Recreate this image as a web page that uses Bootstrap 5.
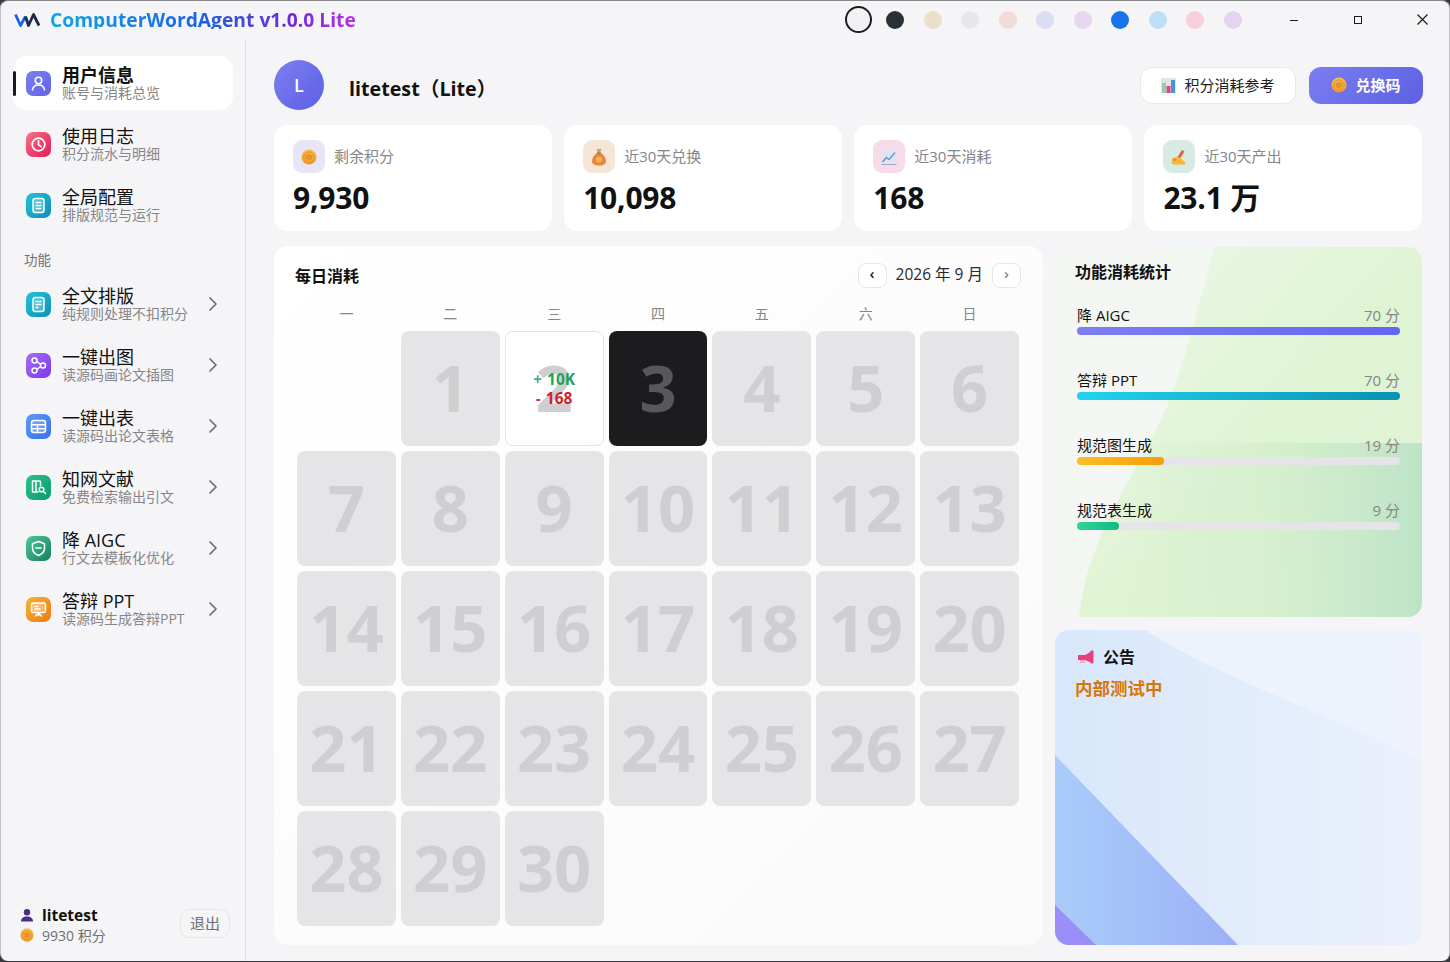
<!DOCTYPE html>
<html lang="zh-CN">
<head>
  <meta charset="UTF-8">
  <title>ComputerWordAgent</title>
  <link href="https://cdn.jsdelivr.net/npm/bootstrap@5.3.0/dist/css/bootstrap.min.css" rel="stylesheet">
  <style>
    html, body { height: 100%; }
    body { background: #3a3a3c; font-family: "Open Sans", "Noto Sans CJK SC", sans-serif; color: #111; overflow: hidden; }
    .app-window { width: 1450px; height: 961px; background: #f5f5f7; border-radius: 8px; border: 1px solid #c4c4c6; border-top-color: #8a8a8c; border-bottom: 0; overflow: hidden; }
    .title-bar { height: 39px; padding-left: 13px; padding-bottom: 2px; }
    .app-title { font-size: 19.25px; font-weight: 700; margin-left: 9px; line-height: 1; background: linear-gradient(90deg, #0ea5e9 0%, #1d62e0 50%, #6d28d9 78%, #b832e6 100%); -webkit-background-clip: text; background-clip: text; color: transparent; }
    .swatch { width: 18px; height: 18px; border-radius: 50%; margin-right: 19.5px; flex: none; }
    .swatch-on { width: 27px; height: 27px; background: #f2f2f4; border: 2px solid #1c1c1e; margin-left: -1px; margin-right: 14px; }
    .win-btns { width: 196px; padding-right: 20px; padding-left: 36px; margin-left: -8px; }
    .side-col { width: 245px; border-right: 1px solid #e2e2e5; flex: none; height: 922px; padding: 16px 12px 0 12px; }
    .side-item { height: 54px; margin-bottom: 7px; padding-left: 13px; border-radius: 14px; position: relative; }
    .side-item.is-on { background: #fff; }
    .side-item.is-on::before { content: ""; position: absolute; left: 0; top: 15px; width: 3px; height: 25px; background: #1c1c1e; border-radius: 2px; }
    .side-icon { width: 25px; height: 25px; border-radius: 7px; flex: none; margin-right: 11px; }
    .side-text { margin-bottom: 1px; }
    .is-on .side-text { margin-bottom: 0; }
    .side-name { font-size: 18px; line-height: 20px; color: #111; }
    .is-on .side-name { font-weight: 700; }
    .side-sub { font-size: 14px; line-height: 16px; color: #85858a; }
    .side-chev { margin-right: 15px; }
    .side-group { font-size: 13.5px; color: #6e6e73; padding-left: 11px; margin-top: 11px; margin-bottom: 7px; line-height: 20px; }
    .side-foot { height: 60px; padding-left: 7px; padding-right: 3px; margin-bottom: 7px; }
    .foot-name { font-size: 15.5px; font-weight: 700; line-height: 20px; }
    .foot-pts { font-size: 14px; color: #6e6e73; line-height: 21px; }
    .exit-btn { font-size: 15px; color: #6e6e73; background: #f5f5f7; border: 1px solid #e6e6e9; border-radius: 9px; width: 50px; height: 29px; padding: 0; margin-bottom: 4px; }
    .main-col { padding: 20px 27px 0 28px; width: 1204px; }
    .avatar-ball { width: 50px; height: 50px; border-radius: 50%; background: linear-gradient(135deg, #7c80f0, #5b5fe6); color: #fff; font-size: 18px; font-weight: 600; }
    .user-title { font-size: 19.7px; font-weight: 700; margin-left: 25px; line-height: 1; padding-top: 7px; }
    .ref-btn { width: 156px; height: 37px; background: #fff; border: 1px solid #e8e8ec; border-radius: 12px; font-size: 15px; color: #1c1c1e; margin-right: 13px; padding: 0; }
    .code-btn { width: 114px; height: 37px; background: linear-gradient(135deg, #7b7ff2, #5c60e2); border: 0; border-radius: 12px; font-size: 15px; font-weight: 700; color: #fff; padding: 0; margin-right: -1px; }
    .head-row { height: 50px; margin-bottom: 15px; }
    .stat-row { gap: 12.5px; margin-bottom: 15px; }
    .stat-box { flex: 1 1 0; height: 106px; background: #fff; border-radius: 14px; padding: 15px 19px 0; }
    .stat-ico { width: 32px; height: 33px; border-radius: 9px; margin-right: 9px; flex: none; }
    .stat-label { font-size: 15px; color: #85858a; line-height: 30px; margin-bottom: 2px; }
    .stat-num { font-size: 30px; font-weight: 700; line-height: 40px; margin-top: 5px; letter-spacing: -.2px; }
    .lower-row { gap: 12px; }
    .cal-panel { width: 769px; height: 699px; background: linear-gradient(135deg, #fff 0%, #fafafa 100%); border-radius: 14px; padding: 18px 22px 0 21px; }
    .panel-title { font-size: 16px; font-weight: 700; line-height: 24px; }
    .month-nav { margin-top: -2px; }
    .month-btn { width: 29px; height: 25px; background: #fff; border: 1px solid #e6e6e9; border-radius: 8px; font-size: 15px; font-weight: 600; line-height: 1; color: #1c1c1e; padding: 0 0 3px; }
    .month-btn.is-next { color: #85858a; }
    .month-txt { font-size: 15.5px; margin: 0 9px 0 9px; color: #2a2a2e; }
    .week-row, .cal-grid { grid-template-columns: repeat(7, 1fr); width: 722px; column-gap: 5px; margin-left: 2px; }
    .week-row { margin-top: 16px; font-size: 14px; color: #85858a; text-align: center; height: 27px; line-height: 20px; }
    .cal-grid { grid-auto-rows: 115px; row-gap: 5px; }
    .cal-day { background: #e5e5e7; border-radius: 8px; color: #cfcfd2; font-size: 65px; font-weight: 700; position: relative; line-height: 1; padding-bottom: 2px; }
    .cal-day.is-today { background: #1c1c1e; color: #58585b; }
    .cal-day.has-data { background: #fff; border: 1px solid #e4e4e6; }
    .cal-chip { position: absolute; inset: 0; font-size: 15.5px; font-weight: 700; line-height: 19px; padding-top: 1px; }
    .chip-up { color: #1fa35a; }
    .chip-down { color: #d11f2f; }
    .chip-sign { opacity: .85; margin-right: 5px; }
    .side-panels { width: 367px; gap: 13px; }
    .usage-panel { height: 370px; border-radius: 14px; position: relative; overflow: hidden; padding: 13px 22px 0 20px; background: linear-gradient(90deg, #f3f6f2, #f5f9f3); margin-top: 1px; }
    .notice-panel { height: 315px; border-radius: 14px; position: relative; overflow: hidden; padding: 15px 20px 0; background: #edf2fc; }
    .panel-bg { position: absolute; inset: 0; width: 100%; height: 100%; }
    .panel-body { position: relative; }
    .usage-title { font-size: 16px; font-weight: 700; line-height: 24px; margin-bottom: 21px; }
    .usage-item { padding-left: 2px; height: 65px; font-size: 15px; line-height: 20px; }
    .usage-val { color: #85858a; }
    .usage-track { height: 8px; background: #e5e5e7; border-radius: 4px; margin-top: 2px; }
    .usage-fill { height: 100%; border-radius: 4px; }
    .fill-a { background: linear-gradient(90deg, #7c80f0, #6366f1); }
    .fill-b { background: linear-gradient(90deg, #22d3ee, #0891b2); }
    .fill-c { background: linear-gradient(90deg, #fbbf24, #f59e0b); }
    .fill-d { background: linear-gradient(90deg, #34d399, #10b981); }
    .notice-title { font-size: 16px; font-weight: 700; line-height: 24px; padding-left: 2px; }
    .notice-text { font-size: 17.5px; font-weight: 700; color: #d97706; line-height: 24px; margin-top: 7px; }
  </style>
</head>
<body>
<svg width="0" height="0" class="position-absolute">
  <defs>
    <linearGradient id="coinFill" x1="0" y1="0" x2="0" y2="1"><stop offset="0" stop-color="#fbbf4d"/><stop offset="1" stop-color="#f0932b"/></linearGradient>
    <symbol id="ico-coin" viewBox="0 0 16 16"><circle cx="8" cy="8" r="7.6" fill="url(#coinFill)"/><circle cx="8" cy="8" r="5.2" fill="#f5a83a" stroke="#e08a1e" stroke-width=".6"/><path d="M5.8 6.6h4.4v3.4H5.8zM8 6.6v3.4" fill="none" stroke="#cf7d16" stroke-width=".8"/></symbol>
    <symbol id="ico-chev" viewBox="0 0 10 16"><path d="M2 2l6 6-6 6" fill="none" stroke="#6e6e73" stroke-width="1.7" stroke-linecap="round" stroke-linejoin="round"/></symbol>
  </defs>
</svg>
<div class="app-window">
  <div class="title-bar d-flex align-items-center">
    <svg width="27" height="16" viewBox="0 0 27 16"><path d="M1.500 2.500l5 11 5-9" fill="none" stroke="#1d62e0" stroke-width="2.800" stroke-linejoin="round"/><path d="M11.500 4.500l3 9 5-11 5.500 11" fill="none" stroke="#1e2a44" stroke-width="2.800" stroke-linejoin="round"/></svg>
    <div class="app-title">ComputerWordAgent v1.0.0 Lite</div>
    <div class="ms-auto d-flex align-items-center">
      <span class="swatch swatch-on"></span>
      <span class="swatch" style="background:#2b3038"></span>
      <span class="swatch" style="background:#ecdfca"></span>
      <span class="swatch" style="background:#e7e7ea"></span>
      <span class="swatch" style="background:#f2dcd6"></span>
      <span class="swatch" style="background:#d9def5"></span>
      <span class="swatch" style="background:#e6d6f0"></span>
      <span class="swatch" style="background:#1a73e8"></span>
      <span class="swatch" style="background:#bfdff8"></span>
      <span class="swatch" style="background:#f9cfdc"></span>
      <span class="swatch" style="background:#e6d3f0"></span>
      <div class="win-btns d-flex justify-content-between align-items-center">
        <svg width="10" height="10" viewBox="0 0 10 10"><path d="M1 5.500h8" stroke="#1c1c1e" stroke-width="1"/></svg>
        <svg width="10" height="10" viewBox="0 0 10 10"><rect x="1.500" y="1.500" width="7" height="7" fill="none" stroke="#1c1c1e" stroke-width="1"/></svg>
        <svg width="13" height="13" viewBox="0 0 13 13"><path d="M1.500 1.500l10 10M11.500 1.500l-10 10" stroke="#1c1c1e" stroke-width="1.200"/></svg>
      </div>
    </div>
  </div>

  <div class="d-flex">
    <div class="side-col d-flex flex-column">
      <div class="side-item is-on d-flex align-items-center">
        <div class="side-icon d-flex align-items-center justify-content-center" style="background:linear-gradient(135deg,#7c80f0,#5f63e6)"><svg width="17" height="17" viewBox="0 0 17 17" fill="none" stroke="#fff" stroke-width="1.600"><circle cx="8.500" cy="5.500" r="3.200"/><path d="M2.500 15c.4-3.400 2.800-5 6-5s5.600 1.600 6 5" stroke-linecap="round"/></svg></div>
        <div class="side-text"><div class="side-name">用户信息</div><div class="side-sub">账号与消耗总览</div></div>
      </div>
      <div class="side-item d-flex align-items-center">
        <div class="side-icon d-flex align-items-center justify-content-center" style="background:linear-gradient(135deg,#f87187,#e11d58)"><svg width="17" height="17" viewBox="0 0 17 17" fill="none" stroke="#fff" stroke-width="1.700"><circle cx="8.500" cy="8.500" r="6.300"/><path d="M8.500 4.800v4l2.600 1.800" stroke-linecap="round"/></svg></div>
        <div class="side-text"><div class="side-name">使用日志</div><div class="side-sub">积分流水与明细</div></div>
      </div>
      <div class="side-item d-flex align-items-center">
        <div class="side-icon d-flex align-items-center justify-content-center" style="background:linear-gradient(135deg,#22c3dc,#0e8fb5)"><svg width="17" height="17" viewBox="0 0 17 17" fill="none" stroke="#fff" stroke-width="1.500"><rect x="3" y="1.500" width="11" height="14" rx="2.200" fill="#ffffff40"/><path d="M5.500 5.500h6M5.500 8.500h6M5.500 11.500h6"/></svg></div>
        <div class="side-text"><div class="side-name">全局配置</div><div class="side-sub">排版规范与运行</div></div>
      </div>

      <div class="side-group">功能</div>

      <div class="side-item d-flex align-items-center">
        <div class="side-icon d-flex align-items-center justify-content-center" style="background:linear-gradient(135deg,#22c3dc,#0e8fb5)"><svg width="17" height="17" viewBox="0 0 17 17" fill="none" stroke="#fff" stroke-width="1.500"><rect x="3" y="1.500" width="11" height="14" rx="2.200" fill="#ffffff40"/><path d="M5.500 5.500h6M5.500 8.500h6M5.500 11.500h3"/></svg></div>
        <div class="side-text"><div class="side-name">全文排版</div><div class="side-sub">纯规则处理不扣积分</div></div>
        <svg class="ms-auto side-chev" width="10" height="16"><use href="#ico-chev"/></svg>
      </div>
      <div class="side-item d-flex align-items-center">
        <div class="side-icon d-flex align-items-center justify-content-center" style="background:linear-gradient(135deg,#a66cf5,#7c3aed)"><svg width="19" height="19" viewBox="0 0 19 19" fill="none" stroke="#fff" stroke-width="1.500"><circle cx="5.500" cy="4.500" r="2.500"/><circle cx="14" cy="9.500" r="2.500"/><circle cx="5.500" cy="14.500" r="2.500"/><path d="M7.800 5.500l3.800 3M7.800 13.500l3.800-3"/></svg></div>
        <div class="side-text"><div class="side-name">一键出图</div><div class="side-sub">读源码画论文插图</div></div>
        <svg class="ms-auto side-chev" width="10" height="16"><use href="#ico-chev"/></svg>
      </div>
      <div class="side-item d-flex align-items-center">
        <div class="side-icon d-flex align-items-center justify-content-center" style="background:linear-gradient(135deg,#5b9cf5,#3b6fe8)"><svg width="17" height="17" viewBox="0 0 17 17" fill="none" stroke="#fff" stroke-width="1.500"><rect x="1.500" y="2.500" width="14" height="12" rx="2.500" fill="#ffffff30"/><path d="M1.500 6.800h14M1.500 10.800h14M7.500 6.800v7.700"/></svg></div>
        <div class="side-text"><div class="side-name">一键出表</div><div class="side-sub">读源码出论文表格</div></div>
        <svg class="ms-auto side-chev" width="10" height="16"><use href="#ico-chev"/></svg>
      </div>
      <div class="side-item d-flex align-items-center">
        <div class="side-icon d-flex align-items-center justify-content-center" style="background:linear-gradient(135deg,#2cc18f,#0c9a6c)"><svg width="19" height="19" viewBox="0 0 19 19" fill="none" stroke="#fff" stroke-width="1.500"><path d="M3.500 3h3.500v11H3.500zM7 3h3.500c.8 0 1 .4 1 1v4M7 14h2.500" stroke-linejoin="round"/><circle cx="12.500" cy="11.500" r="2.300"/><path d="M14.200 13.200l2.300 2.300" stroke-linecap="round"/></svg></div>
        <div class="side-text"><div class="side-name">知网文献</div><div class="side-sub">免费检索输出引文</div></div>
        <svg class="ms-auto side-chev" width="10" height="16"><use href="#ico-chev"/></svg>
      </div>
      <div class="side-item d-flex align-items-center">
        <div class="side-icon d-flex align-items-center justify-content-center" style="background:linear-gradient(135deg,#4fc59c,#15805c)"><svg width="17" height="17" viewBox="0 0 17 17" fill="none" stroke="#fff" stroke-width="1.500"><path d="M8.500 1.500l6 2.200v4.600c0 3.500-2.500 5.900-6 7.200-3.500-1.300-6-3.700-6-7.200V3.700z" stroke-linejoin="round"/><path d="M5.800 8h5.400" stroke-linecap="round"/></svg></div>
        <div class="side-text"><div class="side-name">降 AIGC</div><div class="side-sub">行文去模板化优化</div></div>
        <svg class="ms-auto side-chev" width="10" height="16"><use href="#ico-chev"/></svg>
      </div>
      <div class="side-item d-flex align-items-center">
        <div class="side-icon d-flex align-items-center justify-content-center" style="background:linear-gradient(135deg,#f9b233,#ea7c12)"><svg width="17" height="17" viewBox="0 0 17 17" fill="none" stroke="#fff" stroke-width="1.500"><rect x="1.500" y="2" width="14" height="9.500" rx="1.800" fill="#ffffff50"/><path d="M8.500 11.500v3M5.500 15l3-3 3 3M5 5.500h3M5 8h5" stroke-linecap="round"/></svg></div>
        <div class="side-text"><div class="side-name">答辩 PPT</div><div class="side-sub">读源码生成答辩PPT</div></div>
        <svg class="ms-auto side-chev" width="10" height="16"><use href="#ico-chev"/></svg>
      </div>

      <div class="side-foot mt-auto d-flex align-items-center justify-content-between">
        <div>
          <div class="foot-name d-flex align-items-center gap-2"><svg width="14" height="14" viewBox="0 0 14 14"><circle cx="7" cy="4.200" r="3.200" fill="#4b2e83"/><path d="M1 13.500c0-3.500 2.500-5 6-5s6 1.500 6 5z" fill="#4b2e83"/></svg>litetest</div>
          <div class="foot-pts d-flex align-items-center gap-2"><svg width="14" height="14"><use href="#ico-coin"/></svg>9930 积分</div>
        </div>
        <button class="exit-btn" type="button">退出</button>
      </div>
    </div>

    <div class="main-col">
      <div class="head-row d-flex align-items-center">
        <div class="avatar-ball d-flex align-items-center justify-content-center">L</div>
        <div class="user-title">litetest（Lite）</div>
        <button class="ref-btn ms-auto d-flex align-items-center justify-content-center gap-2" type="button">
          <svg width="15" height="15" viewBox="0 0 15 15"><rect width="15" height="15" fill="#e4e4e8"/><rect x="1" y="5" width="4" height="10" fill="#8fd0a8"/><rect x="5.500" y="8" width="4" height="7" fill="#e6407f"/><rect x="10" y="2" width="4" height="13" fill="#4a90d9"/></svg>积分消耗参考
        </button>
        <button class="code-btn d-flex align-items-center justify-content-center gap-2" type="button"><svg width="16" height="16"><use href="#ico-coin"/></svg>兑换码</button>
      </div>

      <div class="stat-row d-flex">
        <div class="stat-box">
          <div class="d-flex align-items-center"><div class="stat-ico d-flex align-items-center justify-content-center" style="background:#e6e6f8"><svg width="16" height="16"><use href="#ico-coin"/></svg></div><span class="stat-label">剩余积分</span></div>
          <div class="stat-num">9,930</div>
        </div>
        <div class="stat-box">
          <div class="d-flex align-items-center"><div class="stat-ico d-flex align-items-center justify-content-center" style="background:#f6e6d6"><svg width="16" height="18" viewBox="0 0 16 18"><path d="M5.500 1h5l-1.300 3.500H6.800z" fill="#d9a066"/><path d="M6 5h4c3 2 5 5 5 8 0 3-2.500 4.500-7 4.500S1 16 1 13c0-3 2-6 5-8z" fill="#e8853a"/><path d="M6 5h4" stroke="#8a5a2b" stroke-width="1.200"/><circle cx="8" cy="11.500" r="3" fill="#f4b860"/></svg></div><span class="stat-label">近30天兑换</span></div>
          <div class="stat-num">10,098</div>
        </div>
        <div class="stat-box">
          <div class="d-flex align-items-center"><div class="stat-ico d-flex align-items-center justify-content-center" style="background:#f6dbe8"><svg width="16" height="16" viewBox="0 0 16 16"><rect x=".5" y=".5" width="15" height="15" fill="#e3e3ef"/><path d="M.5 15.500h15" stroke="#9aa4c9"/><path d="M1.500 13l4-4.500 2.500 2L14 3.500" fill="none" stroke="#5b9bd5" stroke-width="1.400"/></svg></div><span class="stat-label">近30天消耗</span></div>
          <div class="stat-num">168</div>
        </div>
        <div class="stat-box">
          <div class="d-flex align-items-center"><div class="stat-ico d-flex align-items-center justify-content-center" style="background:#d8ebe3"><svg width="18" height="18" viewBox="0 0 18 18"><path d="M12 2l2.500 1.500-4.500 7-2.500-1.500z" fill="#e2603a"/><path d="M1.500 14.500c.5-3 2.500-5.500 6-6l3 1.500 4 4c1 .8 1 1.500.5 2.500H5c-1.500 0-3-.5-3.500-2z" fill="#f7b733"/><path d="M2 10l5 1.500-3 2z" fill="#ec7a3c"/></svg></div><span class="stat-label">近30天产出</span></div>
          <div class="stat-num">23.1 万</div>
        </div>
      </div>

      <div class="lower-row d-flex">
        <div class="cal-panel">
          <div class="d-flex align-items-center justify-content-between">
            <div class="panel-title">每日消耗</div>
            <div class="month-nav d-flex align-items-center">
              <button class="month-btn" type="button">‹</button>
              <span class="month-txt">2026 年 9 月</span>
              <button class="month-btn is-next" type="button">›</button>
            </div>
          </div>
          <div class="week-row d-grid"><span>一</span><span>二</span><span>三</span><span>四</span><span>五</span><span>六</span><span>日</span></div>
          <div class="cal-grid d-grid">
            <div></div>
            <div class="cal-day d-flex align-items-center justify-content-center">1</div>
            <div class="cal-day has-data d-flex align-items-center justify-content-center">2
              <div class="cal-chip d-flex flex-column align-items-center justify-content-center"><div class="chip-up"><span class="chip-sign">+</span>10K</div><div class="chip-down"><span class="chip-sign">-</span>168</div></div>
            </div>
            <div class="cal-day is-today d-flex align-items-center justify-content-center">3</div>
            <div class="cal-day d-flex align-items-center justify-content-center">4</div>
            <div class="cal-day d-flex align-items-center justify-content-center">5</div>
            <div class="cal-day d-flex align-items-center justify-content-center">6</div>
            <div class="cal-day d-flex align-items-center justify-content-center">7</div>
            <div class="cal-day d-flex align-items-center justify-content-center">8</div>
            <div class="cal-day d-flex align-items-center justify-content-center">9</div>
            <div class="cal-day d-flex align-items-center justify-content-center">10</div>
            <div class="cal-day d-flex align-items-center justify-content-center">11</div>
            <div class="cal-day d-flex align-items-center justify-content-center">12</div>
            <div class="cal-day d-flex align-items-center justify-content-center">13</div>
            <div class="cal-day d-flex align-items-center justify-content-center">14</div>
            <div class="cal-day d-flex align-items-center justify-content-center">15</div>
            <div class="cal-day d-flex align-items-center justify-content-center">16</div>
            <div class="cal-day d-flex align-items-center justify-content-center">17</div>
            <div class="cal-day d-flex align-items-center justify-content-center">18</div>
            <div class="cal-day d-flex align-items-center justify-content-center">19</div>
            <div class="cal-day d-flex align-items-center justify-content-center">20</div>
            <div class="cal-day d-flex align-items-center justify-content-center">21</div>
            <div class="cal-day d-flex align-items-center justify-content-center">22</div>
            <div class="cal-day d-flex align-items-center justify-content-center">23</div>
            <div class="cal-day d-flex align-items-center justify-content-center">24</div>
            <div class="cal-day d-flex align-items-center justify-content-center">25</div>
            <div class="cal-day d-flex align-items-center justify-content-center">26</div>
            <div class="cal-day d-flex align-items-center justify-content-center">27</div>
            <div class="cal-day d-flex align-items-center justify-content-center">28</div>
            <div class="cal-day d-flex align-items-center justify-content-center">29</div>
            <div class="cal-day d-flex align-items-center justify-content-center">30</div>
          </div>
        </div>

        <div class="side-panels d-flex flex-column">
          <div class="usage-panel">
            <svg class="panel-bg" viewBox="0 0 367 370" preserveAspectRatio="none">
              <defs>
                <linearGradient id="greenA" x1="0" y1="0" x2="1" y2="1"><stop offset="0" stop-color="#edf8e8"/><stop offset=".55" stop-color="#dff4d3"/><stop offset="1" stop-color="#e2f4d8"/></linearGradient>
                <linearGradient id="greenB" x1="0" y1="0" x2="1" y2="0"><stop offset="0" stop-color="#bfe3c8" stop-opacity="0"/><stop offset=".45" stop-color="#c6e9c6" stop-opacity=".35"/><stop offset="1" stop-color="#bde3c6"/></linearGradient>
              </defs>
              <path d="M24 370C32 290 80 230 112 160 132 110 148 40 160 0H367V370Z" fill="url(#greenA)"/>
              <rect x="70" y="196" width="297" height="174" fill="url(#greenB)"/>
            </svg>
            <div class="panel-body">
              <div class="usage-title">功能消耗统计</div>
              <div class="usage-item"><div class="d-flex justify-content-between"><span>降 AIGC</span><span class="usage-val">70 分</span></div><div class="usage-track"><div class="usage-fill fill-a" style="width:100%"></div></div></div>
              <div class="usage-item"><div class="d-flex justify-content-between"><span>答辩 PPT</span><span class="usage-val">70 分</span></div><div class="usage-track"><div class="usage-fill fill-b" style="width:100%"></div></div></div>
              <div class="usage-item"><div class="d-flex justify-content-between"><span>规范图生成</span><span class="usage-val">19 分</span></div><div class="usage-track"><div class="usage-fill fill-c" style="width:27%"></div></div></div>
              <div class="usage-item"><div class="d-flex justify-content-between"><span>规范表生成</span><span class="usage-val">9 分</span></div><div class="usage-track"><div class="usage-fill fill-d" style="width:13%"></div></div></div>
            </div>
          </div>
          <div class="notice-panel">
            <svg class="panel-bg" viewBox="0 0 367 315" preserveAspectRatio="none">
              <defs>
                <linearGradient id="blueA" x1="0" y1="0" x2="1" y2="0"><stop offset="0" stop-color="#d8e7fb"/><stop offset="1" stop-color="#ebf1fc"/></linearGradient>
                <linearGradient id="blueB" x1="0" y1="0" x2="1" y2="0"><stop offset="0" stop-color="#a9ccfa"/><stop offset="1" stop-color="#9cb0f5"/></linearGradient>
              </defs>
              <path d="M0 0H90C150 40 260 80 367 130V315H0Z" fill="url(#blueA)"/>
              <path d="M0 125L183 315H0Z" fill="url(#blueB)"/>
              <path d="M0 275L41 315H0Z" fill="#9a8ff7"/>
            </svg>
            <div class="panel-body">
              <div class="notice-title d-flex align-items-center gap-2"><svg width="18" height="15" viewBox="0 0 18 15"><path d="M1 5h7l7-4v12l-7-3H1z" fill="#e6407f"/><rect x="13.500" y=".5" width="3" height="13" rx="1" fill="#e6407f"/><rect x="3" y="10" width="5" height="3" fill="#e8b6c8"/></svg>公告</div>
              <div class="notice-text">内部测试中</div>
            </div>
          </div>
        </div>
      </div>
    </div>
  </div>
</div>
<script src="https://cdn.jsdelivr.net/npm/bootstrap@5.3.0/dist/js/bootstrap.bundle.min.js"></script>
</body>
</html>
